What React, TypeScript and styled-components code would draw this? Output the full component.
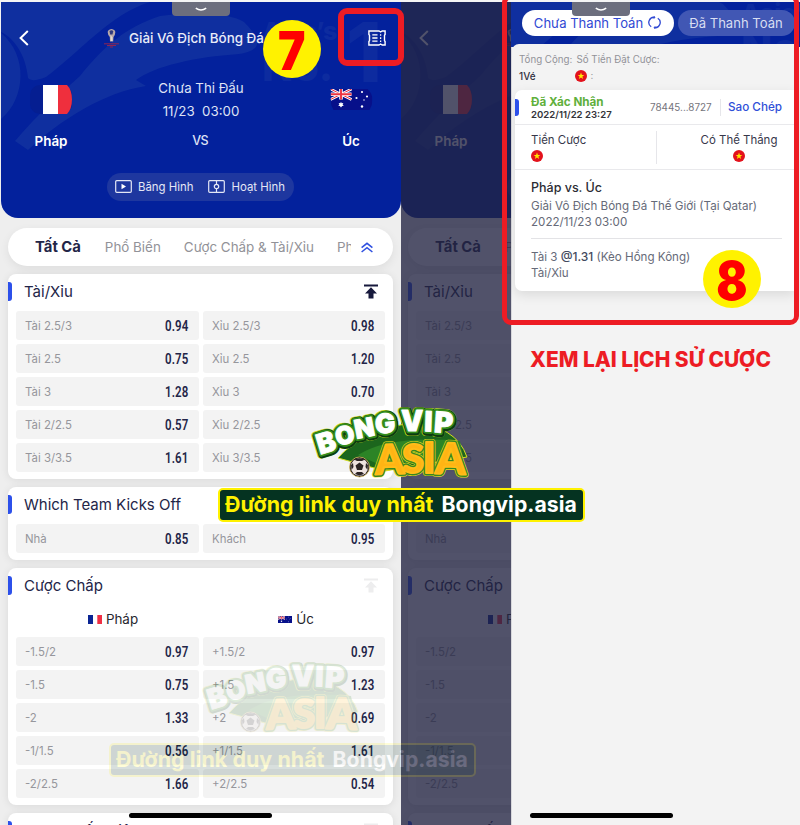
import React from 'react';
import styled, { createGlobalStyle, css } from 'styled-components';

const GlobalStyle = createGlobalStyle`
  *, *::before, *::after { box-sizing: border-box; }
  body { margin: 0; background: #f3f3f3; font-family: Inter, "Noto Sans", sans-serif; }
`;

const ink = '#232548';
const royal = '#03219c';
const accent = '#2c50ea';
const alertRed = '#ed1c24';

const Board = styled.main`
  position: relative;
  display: grid;
  grid-template-columns: 401px 399px;
  width: 800px;
  height: 825px;
  overflow: hidden;
`;

const Screen = styled.section<{ $inset?: number }>`
  position: relative;
  overflow: hidden;
  height: 825px;
  padding: 2px 0 0 ${p => p.$inset ?? 0}px;
  background: linear-gradient(#f5f5f5, #eeeeee 60px);
`;

const Phone = styled.div`
  width: 400px;
`;

/* ---------- match header ---------- */

const Header = styled.header`
  position: relative;
  height: 216px;
  border-radius: 0 0 17px 17px;
  background: ${royal};
  color: #fff;
  overflow: hidden;
`;

const Backdrop = styled.svg<{ $dx?: number; $dy?: number }>`
  position: absolute;
  left: ${p => p.$dx ?? 0}px;
  top: ${p => p.$dy ?? 0}px;
`;

const HeaderBody = styled.div`
  position: relative;
  height: 100%;
`;

const TitleBar = styled.div`
  display: grid;
  grid-template-columns: 102px 1fr 33px;
  align-items: center;
  height: 72px;

  & > svg:first-child { margin-left: 18px; }
`;

const TitleText = styled.div`
  display: flex;
  align-items: center;
  gap: 9px;
  font-size: 13.4px;
  font-weight: 500;
  white-space: nowrap;
  color: #e9ecf8;
`;

const Teams = styled.div`
  display: grid;
  grid-template-columns: 100px 1fr 100px;
  height: 82px;
`;

const Team = styled.div`
  display: grid;
  grid-template-rows: 51px 1fr;
  justify-items: center;
  align-items: center;
  font-size: 13.4px;
  font-weight: 600;
`;

const Status = styled.div`
  display: grid;
  grid-template-rows: 26px 19px 1fr;
  justify-items: center;
  align-items: center;
  padding-top: 1px;
  font-size: 13.3px;
  white-space: pre;
  color: #dfe3f5;
`;

const Versus = styled.span`
  padding: 5px 2px 0 0;
  font-size: 12.5px;
  font-weight: 500;
  letter-spacing: -0.8px;
`;

const MediaPill = styled.div`
  display: flex;
  align-items: center;
  gap: 6px;
  width: 187px;
  height: 28px;
  margin: 17px 0 0 106px;
  padding: 0 8px 1px;
  border-radius: 14px;
  background: #1e379f;
  font-size: 11.4px;
  white-space: nowrap;
  color: #e4e7f5;

  span + svg { margin-left: 9px; }
`;

/* ---------- market list ---------- */

const TabBar = styled.nav`
  display: flex;
  align-items: center;
  width: 385px;
  height: 38px;
  margin: 10px 0 0 7px;
  padding: 0 19px 0 27px;
  border-radius: 19px;
  background: #fff;
  box-shadow: 0 3px 10px rgba(0, 0, 0, 0.07);
`;

const Tab = styled.span<{ $active?: boolean; $clip?: boolean }>`
  margin-right: 23px;
  font-size: 13.4px;
  white-space: nowrap;
  color: #929298;
  ${p => p.$active && css`margin-right: 24px; font-size: 14.8px; font-weight: 700; color: ${ink};`}
  ${p => p.$clip && css`width: 14px; margin-right: 10px; overflow: hidden;`}
`;

const Card = styled.section`
  width: 385px;
  margin: 8px 0 0 7px;
  padding-bottom: 7px;
  border-radius: 8px;
  background: #fff;
  box-shadow: 0 1px 9px rgba(0, 0, 0, 0.09);
`;

const CardHead = styled.div`
  display: flex;
  align-items: center;
  justify-content: space-between;
  height: 37px;
  padding: 0 15px 3px 0;
`;

const CardTitle = styled.h2`
  display: flex;
  align-items: center;
  gap: 12px;
  margin: 0;
  font-size: 15px;
  font-weight: 400;
  white-space: nowrap;
  color: ${ink};

  &::before {
    content: '';
    width: 4px;
    height: 19px;
    border-radius: 0 3px 3px 0;
    background: ${accent};
  }
`;

const SideNames = styled.div`
  display: grid;
  grid-template-columns: 188px 178px;
  height: 32px;
  padding: 0 0 4px 11px;
`;

const Side = styled.span`
  display: flex;
  align-items: center;
  justify-content: center;
  gap: 4px;
  font-size: 13.4px;
  color: #26262e;
`;

const OddsGrid = styled.div`
  display: grid;
  grid-template-columns: 183px 182px;
  grid-auto-rows: 29px;
  gap: 4px;
  padding-left: 8px;
`;

const OddsCell = styled.div`
  display: flex;
  align-items: center;
  justify-content: space-between;
  padding: 0 11px 0 9px;
  border-radius: 3px;
  background: #f3f3f3;
`;

const OddsLabel = styled.span`
  font-size: 11.4px;
  color: #96969c;
`;

const OddsValue = styled.span`
  font-family: Roboto, Inter, sans-serif;
  font-size: 14px;
  font-weight: 600;
  letter-spacing: 0.1px;
  color: ${ink};
  transform: scaleX(0.82);
  transform-origin: right center;
`;

/* ---------- bet slip drawer ---------- */

const Scrim = styled.div`
  position: absolute;
  inset: 2px 0 0 0;
  background: rgba(34, 35, 66, 0.79);
`;

const Drawer = styled.aside`
  position: absolute;
  inset: 2px 0 0 110px;
  border-left: 1px solid #d8d8dc;
  background: #f3f3f3;
`;

const DrawerTop = styled.div`
  position: relative;
  display: flex;
  gap: 4px;
  height: 45px;
  margin-left: -1px;
  padding: 8px 0 0 11px;
  background: ${royal};
  overflow: hidden;
`;

const SlipTab = styled.span<{ $active?: boolean }>`
  position: relative;
  display: flex;
  align-items: center;
  justify-content: center;
  gap: 5px;
  flex: none;
  width: ${p => (p.$active ? 152 : 117)}px;
  height: 26px;
  padding: 0 1px 1px 0;
  border-radius: 13px;
  background: ${p => (p.$active ? '#fff' : '#4157b4')};
  font-size: 13.05px;
  white-space: nowrap;
  color: ${p => (p.$active ? '#3049d3' : '#d9def2')};
`;

const DrawerBody = styled.div`
  position: relative;
  margin-top: -3px;
  width: 283px;
  height: 400px;
  border-radius: 7px 0 0 0;
  background: #f3f3f3;
`;

const Totals = styled.div`
  display: grid;
  grid-template-columns: 57.5px 1fr;
  grid-template-rows: 15px 17px;
  align-items: center;
  height: 46px;
  padding: 8px 0 0 7px;
  font-size: 9.75px;
  white-space: nowrap;
  color: #929298;
`;

const TicketCount = styled.b`
  font-size: 10px;
  font-weight: 500;
  color: #303040;
`;

const Currency = styled.span`
  display: flex;
  align-items: center;
  gap: 4px;
  margin-left: -2px;
`;

const Ticket = styled.article`
  width: 280px;
  height: 201px;
  margin-left: 3px;
  border-radius: 7px 0 0 7px;
  background: #fff;
  box-shadow: 0 4px 12px rgba(0, 0, 0, 0.1);
`;

const TicketHead = styled.div`
  display: grid;
  grid-template-columns: 4px 115px 86px 1px 1fr;
  align-items: center;
  height: 35px;
  border-bottom: 1px solid #e9e9ec;
`;

const TicketMark = styled.i`
  width: 4px;
  height: 17px;
  border-radius: 0 3px 3px 0;
  background: ${accent};
`;

const Confirmed = styled.div`
  padding-left: 12px;
  font-size: 9.6px;
  font-weight: 600;
  line-height: 11px;
  white-space: nowrap;
  color: #333339;

  strong {
    display: block;
    font-size: 11.7px;
    font-weight: 700;
    line-height: 14px;
    color: #5fb03c;
  }
`;

const TicketNumber = styled.span`
  padding-left: 16px;
  font-size: 9.9px;
  color: #74747c;
`;

const Divider = styled.i<{ $tall?: boolean }>`
  width: 1px;
  height: ${p => (p.$tall ? 33 : 17)}px;
  background: #e6e6ea;
`;

const CopyLink = styled.span`
  padding-left: 7px;
  font-size: 11.7px;
  font-weight: 500;
  white-space: nowrap;
  color: #2f4fd8;
`;

const Amounts = styled.div`
  display: grid;
  grid-template-columns: 141px 1px 1fr;
  height: 45px;
  border-bottom: 1px solid #e9e9ec;
  align-items: center;
`;

const Amount = styled.div<{ $centered?: boolean }>`
  display: grid;
  gap: 2px;
  justify-items: ${p => (p.$centered ? 'center' : 'start')};
  padding: ${p => (p.$centered ? '0 14px 0 40px' : '0 0 0 16px')};
  font-size: 11.45px;
  line-height: 15px;
  white-space: nowrap;
  color: #37374a;
`;

const Details = styled.div`
  margin: 0 13px 0 16px;
  padding: 9px 0 8px;
  border-bottom: 1px solid #e3e3e6;
  font-size: 11.6px;
  line-height: 16px;
  white-space: nowrap;
  color: #666a78;

  & + & { border: 0; padding-top: 10px; }
`;

const Fixture = styled.h3`
  margin: 0 0 1px;
  font-size: 12.5px;
  font-weight: 500;
  line-height: 18px;
  color: #2b2b33;
`;

const Price = styled.b`
  font-size: 12px;
  font-weight: 500;
  color: #444a5e;
`;

/* ---------- device chrome ---------- */

const NotchTab = styled.div<{ $left: number }>`
  position: absolute;
  top: 2px;
  left: ${p => p.$left}px;
  display: flex;
  justify-content: center;
  width: 58px;
  height: 14px;
  padding-top: 5px;
  border-radius: 0 0 4px 4px;
  background: #6c6e7d;
`;

const HomeBar = styled.div<{ $left: number }>`
  position: absolute;
  top: 813px;
  left: ${p => p.$left}px;
  width: 143px;
  height: 5px;
  border-radius: 3px;
  background: #000;
`;

/* ---------- annotations ---------- */

const Frame = styled.div<{ $x: number; $y: number; $w: number; $h: number; $line: number }>`
  position: absolute;
  left: ${p => p.$x}px;
  top: ${p => p.$y}px;
  width: ${p => p.$w}px;
  height: ${p => p.$h}px;
  border: ${p => p.$line}px solid ${alertRed};
  border-radius: 9px;
`;

const StepBadge = styled.div<{ $x: number; $y: number }>`
  position: absolute;
  left: ${p => p.$x}px;
  top: ${p => p.$y}px;
  display: flex;
  align-items: center;
  justify-content: center;
  width: 58px;
  height: 58px;
  border-radius: 50%;
  background: #fff200;
  font-size: 53px;
  font-weight: 900;
  line-height: 1;
  padding-top: 4px;
  color: #ff0000;

  span { transform: scaleX(0.87); }
`;

const Caption = styled.p`
  position: absolute;
  left: 530px;
  top: 346px;
  margin: 0;
  font-size: 20.9px;
  font-weight: 800;
  line-height: 28px;
  white-space: nowrap;
  color: ${alertRed};
`;

const Watermark = styled.div<{ $x: number; $y: number; $faint?: boolean }>`
  position: absolute;
  left: ${p => p.$x}px;
  top: ${p => p.$y}px;
  width: 367px;
  opacity: ${p => (p.$faint ? 0.15 : 1)};

  & > svg { display: block; margin-left: 92px; }
`;

const Banner = styled.div`
  display: flex;
  align-items: center;
  gap: 8px;
  height: 34px;
  margin-top: 7px;
  padding: 0 0 2px 5px;
  border: 2px solid #fff200;
  border-radius: 5px;
  background: #053321;
  font-size: 21.4px;
  font-weight: 700;
  letter-spacing: 0.06px;
  white-space: nowrap;
  color: #fff200;

  b { color: #fff; font-weight: 700; font-size: 21.2px; }
`;

/* ---------- icons ---------- */

const Swooshes = ({ dx, dy }: { dx?: number; dy?: number }) => (
  <Backdrop $dx={dx} $dy={dy} width="400" height="216" viewBox="1 2 400 216">
    <path d="M1 2H150C110 14 80 52 46 77C36 81 31 81 28 78C26 55 14 38 1 32Z" fill="#0f2f9f" />
    <path d="M15 141C40 112 62 92 80 76C105 45 125 28 160 16C205 11 230 14 244 22C262 40 263 50 239 54C195 57 155 66 136 80L146 86C105 92 60 120 28 150Z" fill="#0f2f9f" />
    <path d="M1 33C28 55 26 98 1 119Z" fill="#0f2f9f" />
    <g fill="#0d2b9f" fontFamily="Inter, sans-serif" fontWeight="800">
      <text x="262" y="40" fontSize="25">Asia’s</text>
      <text x="262" y="81" fontSize="41">No.</text>
      <text x="346" y="82" fontSize="82">1</text>
    </g>
  </Backdrop>
);

const BackIcon = () => (
  <svg width="10" height="16" viewBox="0 0 10 16" fill="none" stroke="#fff" strokeWidth="2">
    <path d="M8.8 1L1.6 8L8.8 15" />
  </svg>
);

const TrophyIcon = () => (
  <svg width="17" height="20" viewBox="0 0 17 20">
    <path d="M5 2.8Q8.5-1 12 2.8Q13 6 10.5 9L10.2 13.5H7L6.8 9Q4 6 5 2.8Z" fill="#b8a9aa" />
    <path d="M6.5 3Q8.5 1.5 10.3 3L9.5 6.5H7.2Z" fill="#313b7d" />
    <path d="M7.5 7L9.5 9.5V13H7.7Z" fill="#e4dcd2" />
    <path d="M1 15.8H16M4 17.5H13M7 19H10" stroke="#8d2554" strokeWidth="1" />
  </svg>
);

const TicketIcon = () => (
  <svg width="18" height="16" viewBox="0 0 18 16" fill="none" stroke="#fff" strokeWidth="1.4">
    <path d="M.9 1H11L12.6 2L14.2 1H17.1V4.5L16.5 5.3V10.7L17.1 11.5V15H14.2L12.6 14L11 15H.9V11.5L1.5 10.7V5.3L.9 4.5Z" />
    <path d="M4.3 4.8H9.5M4.3 8H9.5M4.3 11.2H9.5" strokeWidth="1.3" />
    <path d="M12.6 4.2V12.2" strokeWidth="1.3" strokeDasharray="1.6 1.5" />
  </svg>
);

const VideoIcon = () => (
  <svg width="17" height="13" viewBox="0 0 17 13" fill="none" stroke="#e4e7f5" strokeWidth="1.2">
    <rect x=".7" y=".7" width="15.6" height="11.6" rx="1" />
    <path d="M6.5 3.7V9.3L11 6.5Z" fill="#fff" stroke="none" />
  </svg>
);

const PitchIcon = () => (
  <svg width="17" height="13" viewBox="0 0 17 13" fill="none" stroke="#e4e7f5" strokeWidth="1.2">
    <rect x=".7" y=".7" width="15.6" height="11.6" rx="1" />
    <path d="M8.5 1V4.3M8.5 8.7V12" />
    <circle cx="8.5" cy="6.5" r="2.2" />
  </svg>
);

const FranceFlag = () => (
  <svg width="42" height="29" viewBox="0 0 42 29">
    <rect width="42" height="29" rx="10" fill="#051e91" />
    <rect x="13" width="15" height="29" fill="#fff" />
    <path d="M28 0H37Q42 5 42 14.5Q42 24 37 29H28Z" fill="#ef2f3d" />
  </svg>
);

const AustraliaArt = () => (
  <>
    <rect width="42" height="21" fill="#07108a" />
    <path d="M0 0L21 10.5M21 0L0 10.5" stroke="#fff" strokeWidth="2.6" />
    <path d="M0 0L21 10.5M21 0L0 10.5" stroke="#ed3340" strokeWidth="1" />
    <path d="M10.5 0V10.5M0 5.2H21" stroke="#fff" strokeWidth="3.6" />
    <path d="M10.5 0V10.5M0 5.2H21" stroke="#ed3340" strokeWidth="1.9" />
    <path d="M10.5 12.7L11.2 14.3L12.9 13.9L12.1 15.5L13.3 16.7L11.6 17L10.5 18.5L9.4 17L7.7 16.7L8.9 15.5L8.1 13.9L9.8 14.3Z" fill="#fff" />
    <g fill="#fff">
      <circle cx="31.5" cy="3" r="1.1" />
      <circle cx="26" cy="9" r="1.1" />
      <circle cx="36.5" cy="7.5" r="1.1" />
      <circle cx="33.5" cy="11" r=".7" />
      <circle cx="31.5" cy="17.5" r="1.2" />
    </g>
  </>
);

const AustraliaFlag = () => (
  <svg width="43" height="21" viewBox="0 0 42 21">
    <clipPath id="ausRound"><path d="M0 0H37Q42 5 42 10.5Q42 16 39 21H3Q0 16 0 10.5Z" /></clipPath>
    <g clipPath="url(#ausRound)"><AustraliaArt /></g>
  </svg>
);

const MiniFrance = () => (
  <svg width="14" height="9" viewBox="0 0 14 9">
    <rect width="5" height="9" fill="#0a2493" />
    <rect x="5" width="4.5" height="9" fill="#fff" />
    <rect x="9.3" width="4.7" height="9" fill="#f02f44" />
  </svg>
);

const MiniAustralia = () => (
  <svg width="14" height="7" viewBox="0 0 42 21"><AustraliaArt /></svg>
);

const CollapseIcon = () => (
  <svg width="12" height="11" viewBox="0 0 12 11" fill="none" stroke="#2f50e0" strokeWidth="1.5">
    <path d="M.6 5.6L6 1.3L11.4 5.6M.6 10L6 5.7L11.4 10" />
  </svg>
);

const PinTopIcon = ({ muted }: { muted?: boolean }) => (
  <svg width="14" height="15" viewBox="0 0 14 15" fill={muted ? '#ededee' : '#17193c'}>
    <path d="M0 .5H14V2.6H0ZM7 3.2L13 9.5H9.5V14.5H4.5V9.5H1Z" />
  </svg>
);

const RefreshIcon = () => (
  <svg width="13" height="13" viewBox="0 0 13 13" fill="none" stroke="#3049d3" strokeWidth="1.3">
    <path d="M3.2 10.7A5.1 5.1 0 0 1 6.9 1.4M9.8 2.3A5.1 5.1 0 0 1 6.1 11.6" />
    <path d="M5.6 .1L7 1.4L5.7 2.8M7.3 10.2L6 11.6L7.4 12.9" strokeWidth="1" />
  </svg>
);

const DongIcon = () => (
  <svg width="12" height="12" viewBox="0 0 12 12">
    <circle cx="6" cy="6" r="6" fill="#e3121c" />
    <path d="M6 2.6L6.9 4.9L9.3 5L7.4 6.6L8.1 8.9L6 7.6L3.9 8.9L4.6 6.6L2.7 5L5.1 4.9Z" fill="#ffe600" />
  </svg>
);

const NotchChevron = () => (
  <svg width="12" height="5" viewBox="0 0 12 5" fill="none" stroke="#fff" strokeWidth="1.6">
    <path d="M.8 1.2Q6 4.8 11.2 1.2" />
  </svg>
);

/* letter, centre x, baseline y, size, rotation */
type Letter = [string, number, number, number, number];

const whiteLetters: Letter[] = [
  ['B', 19, 47, 28, -17],
  ['O', 37, 39, 25, -14],
  ['N', 56, 32, 26, -11],
  ['G', 76, 28, 27, -5],
  ['V', 102, 26, 28, 0],
  ['I', 118, 26.5, 28, 2],
  ['P', 133, 28, 29, 4],
];

const goldLetters: Letter[] = [
  ['A', 80, 69, 41, -2],
  ['S', 103, 68, 40, 0],
  ['I', 119, 68, 42, 0],
  ['A', 140, 69, 43, 2],
];

const LetterLayer = ({ letters, ...paint }: { letters: Letter[] } & React.SVGProps<SVGGElement>) => (
  <g fontWeight="900" textAnchor="middle" strokeLinejoin="round" {...paint}>
    {letters.map(([ch, x, y, size, turn], i) => (
      <text key={i} fontSize={size} transform={`translate(${x} ${y}) rotate(${turn})`}>{ch}</text>
    ))}
  </g>
);

const Logo = () => (
  <svg width="162" height="76" viewBox="0 0 162 76" overflow="visible">
    <path d="M28 53Q50 27 100 18Q146 20 157 52L75 66Z" fill="#1c661d" stroke="#d7de21" strokeWidth="1" />
    <path d="M48 50Q80 30 150 36L153 52L70 60Z" fill="#2c8426" />
    <g fontFamily="Inter, sans-serif">
      <LetterLayer letters={whiteLetters} fill="#b9d81d" stroke="#b9d81d" strokeWidth="7.6" transform="translate(0 .6)" />
      <LetterLayer letters={whiteLetters} fill="#0c3c10" stroke="#0c3c10" strokeWidth="6.8" transform="translate(.5 .8)" />
      <LetterLayer letters={whiteLetters} fill="#3f9f20" stroke="#338c1c" strokeWidth="4.6" />
      <LetterLayer letters={whiteLetters} fill="#fff" stroke="#fff" strokeWidth=".9" />
    </g>
    <g fontFamily="Lato, sans-serif">
      <LetterLayer letters={goldLetters} fill="#eadb1f" stroke="#eadb1f" strokeWidth="6" />
      <LetterLayer letters={goldLetters} fill="#38871f" stroke="#38871f" strokeWidth="4.8" />
      <LetterLayer letters={goldLetters} fill="#ffb414" stroke="#ffbc18" strokeWidth="2" />
    </g>
    <circle cx="49.5" cy="62" r="10" fill="#171313" stroke="#d9ba63" strokeWidth=".8" />
    <circle cx="49.5" cy="62" r="8.8" fill="#eee3df" />
    <path d="M49.5 57.5L53.5 60.5L52 65H47L45.5 60.5ZM44 54.5L49.5 53.3L55 54.5L52 56H47ZM41 60L43 58L43.5 62L41.5 65ZM58 60L56 58L55.5 62L57.5 65ZM45 69L47 67H52L54 69L49.5 70.5Z" fill="#2c2424" />
  </svg>
);

/* ---------- content ---------- */

type Odds = [string, string];

const overUnder: Odds[] = [
  ['Tài 2.5/3', '0.94'], ['Xỉu 2.5/3', '0.98'],
  ['Tài 2.5', '0.75'], ['Xỉu 2.5', '1.20'],
  ['Tài 3', '1.28'], ['Xỉu 3', '0.70'],
  ['Tài 2/2.5', '0.57'], ['Xỉu 2/2.5', ''],
  ['Tài 3/3.5', '1.61'], ['Xỉu 3/3.5', ''],
];

const kickOff: Odds[] = [['Nhà', '0.85'], ['Khách', '0.95']];

const handicap: Odds[] = [
  ['-1.5/2', '0.97'], ['+1.5/2', '0.97'],
  ['-1.5', '0.75'], ['+1.5', '1.23'],
  ['-2', '1.33'], ['+2', '0.69'],
  ['-1/1.5', '0.56'], ['+1/1.5', '1.61'],
  ['-2/2.5', '1.66'], ['+2/2.5', '0.54'],
];

const OddsTable = ({ odds }: { odds: Odds[] }) => (
  <OddsGrid>
    {odds.map(([label, value]) => (
      <OddsCell key={label}>
        <OddsLabel>{label}</OddsLabel>
        <OddsValue>{value}</OddsValue>
      </OddsCell>
    ))}
  </OddsGrid>
);

const MatchPage = () => (
  <Phone>
    <Header>
      <Swooshes />
      <HeaderBody>
        <TitleBar>
          <BackIcon />
          <TitleText><TrophyIcon />Giải Vô Địch Bóng Đá</TitleText>
          <TicketIcon />
        </TitleBar>
        <Teams>
          <Team><FranceFlag />Pháp</Team>
          <Status>
            <span>Chưa Thi Đấu</span>
            <span>11/23  03:00</span>
            <Versus>VS</Versus>
          </Status>
          <Team><AustraliaFlag />Úc</Team>
        </Teams>
        <MediaPill>
          <VideoIcon /><span>Băng Hình</span>
          <PitchIcon /><span>Hoạt Hình</span>
        </MediaPill>
      </HeaderBody>
    </Header>
    <TabBar>
      <Tab $active>Tất Cả</Tab>
      <Tab>Phổ Biến</Tab>
      <Tab>Cược Chấp &amp; Tài/Xỉu</Tab>
      <Tab $clip>Phạt</Tab>
      <CollapseIcon />
    </TabBar>
    <Card>
      <CardHead><CardTitle>Tài/Xỉu</CardTitle><PinTopIcon /></CardHead>
      <OddsTable odds={overUnder} />
    </Card>
    <Card>
      <CardHead><CardTitle>Which Team Kicks Off</CardTitle></CardHead>
      <OddsTable odds={kickOff} />
    </Card>
    <Card>
      <CardHead><CardTitle>Cược Chấp</CardTitle><PinTopIcon muted /></CardHead>
      <SideNames>
        <Side><MiniFrance />Pháp</Side>
        <Side><MiniAustralia />Úc</Side>
      </SideNames>
      <OddsTable odds={handicap} />
    </Card>
    <Card>
      <CardHead><CardTitle>Cược Chấp Hiệp 1</CardTitle><PinTopIcon muted /></CardHead>
    </Card>
  </Phone>
);

const BetSlip = () => (
  <Drawer>
    <DrawerTop>
      <Swooshes dx={-31} dy={-18} />
      <SlipTab $active>Chưa Thanh Toán<RefreshIcon /></SlipTab>
      <SlipTab>Đã Thanh Toán</SlipTab>
    </DrawerTop>
    <DrawerBody>
      <Totals>
        <span>Tổng Cộng:</span>
        <span>Số Tiền Đặt Cược:</span>
        <TicketCount>1Vé</TicketCount>
        <Currency><DongIcon />:</Currency>
      </Totals>
      <Ticket>
        <TicketHead>
          <TicketMark />
          <Confirmed><strong>Đã Xác Nhận</strong>2022/11/22 23:27</Confirmed>
          <TicketNumber>78445...8727</TicketNumber>
          <Divider />
          <CopyLink>Sao Chép</CopyLink>
        </TicketHead>
        <Amounts>
          <Amount>Tiền Cược<DongIcon /></Amount>
          <Divider $tall />
          <Amount $centered>Có Thể Thắng<DongIcon /></Amount>
        </Amounts>
        <Details>
          <Fixture>Pháp vs. Úc</Fixture>
          Giải Vô Địch Bóng Đá Thế Giới (Tại Qatar)<br />
          2022/11/23 03:00
        </Details>
        <Details>
          Tài 3 <Price>@1.31</Price> (Kèo Hồng Kông)<br />
          Tài/Xỉu
        </Details>
      </Ticket>
    </DrawerBody>
  </Drawer>
);

const Stamp = ({ x, y, faint }: { x: number; y: number; faint?: boolean }) => (
  <Watermark $x={x} $y={y} $faint={faint}>
    <Logo />
    <Banner>Đường link duy nhất <b>Bongvip.asia</b></Banner>
  </Watermark>
);

export default function App() {
  return (
    <>
      <GlobalStyle />
      <Board>
        <Screen $inset={1}><MatchPage /></Screen>
        <Screen>
          <MatchPage />
          <Scrim />
          <BetSlip />
        </Screen>
        <NotchTab $left={172}><NotchChevron /></NotchTab>
        <NotchTab $left={572}><NotchChevron /></NotchTab>
        <Stamp x={109} y={660} faint />
        <HomeBar $left={129} />
        <HomeBar $left={530} />
        <Frame $x={338} $y={8} $w={66} $h={58} $line={6} />
        <Frame $x={502} $y={-6} $w={297} $h={331} $line={5} />
        <StepBadge $x={263} $y={20}><span>7</span></StepBadge>
        <StepBadge $x={703} $y={250}><span>8</span></StepBadge>
        <Caption>XEM LẠI LỊCH SỬ CƯỢC</Caption>
        <Stamp x={218} y={405} />
      </Board>
    </>
  );
}
